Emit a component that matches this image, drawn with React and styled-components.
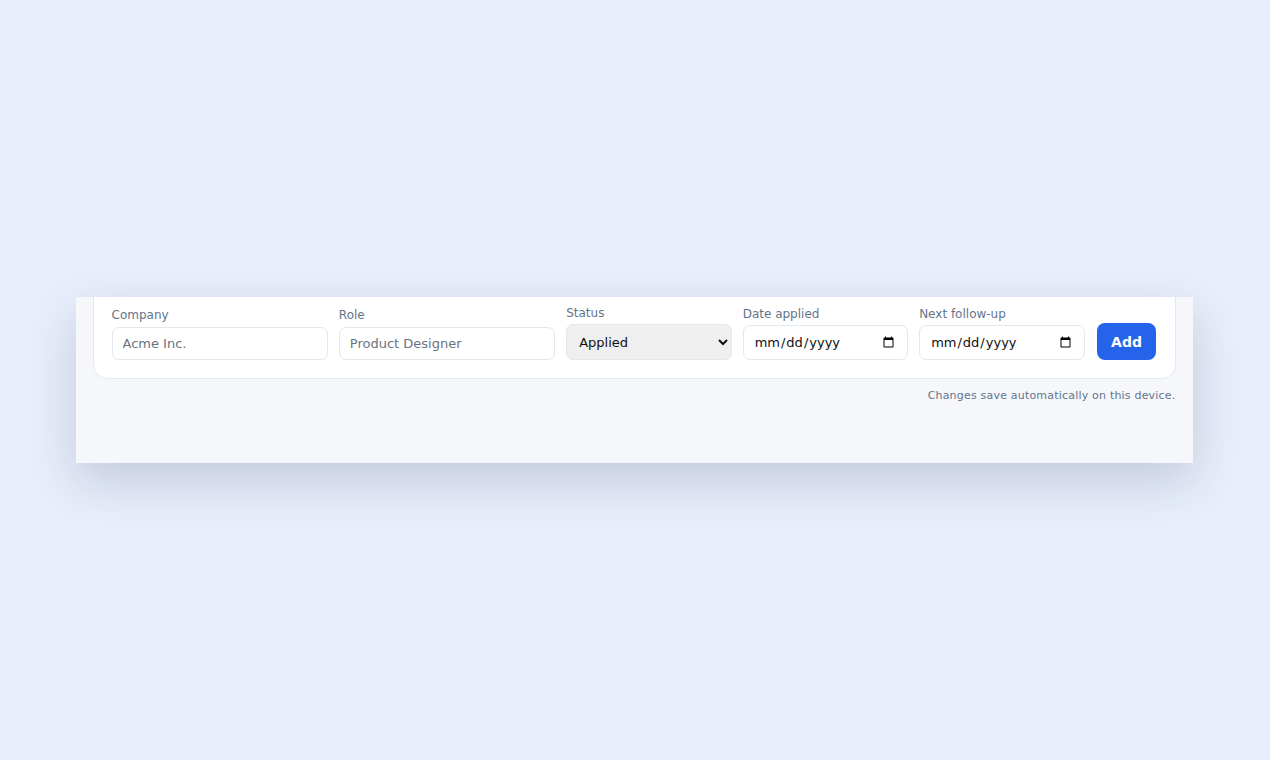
import React from "react";
import styled, { createGlobalStyle } from "styled-components";

const Global = createGlobalStyle`
  html, body { margin: 0; background: #e8eefb; font-family: "DejaVu Sans", sans-serif; }
`;
const Page = styled.div`
  width: 1270px; height: 760px; display: flex; justify-content: center; padding-top: 297px; box-sizing: border-box;
`;
const Panel = styled.div`
  width: 1117px; height: 166px; background: #f5f7fb; overflow: hidden; margin-left: -2px;
  box-shadow: 0 18px 45px rgba(30, 41, 80, 0.18);
  padding: 0 17px; box-sizing: border-box;
`;
const Card = styled.div`
  margin-top: -14px; background: #fff; border: 1px solid #e3e7ee; border-radius: 14px;
  padding: 22px 18px 18px; display: flex; align-items: flex-end; gap: 11px;
`;
const Field = styled.label`
  display: flex; flex-direction: column; gap: ${p => p.$gap}px; width: ${p => p.$w}px;
  font-size: 12px; color: #64748b;
`;
const Input = styled.input`
  box-sizing: border-box; height: ${p => p.$h || 33}px; border: 1px solid #e3e7ee; border-radius: 7px;
  padding: 0 10px; font: 13px "DejaVu Sans", sans-serif; color: #111; background: #fff; width: 100%;
  &::placeholder { color: #6b7280; }
`;
const Select = styled.select`
  box-sizing: border-box; height: 36px; border: 1px solid #e3e7ee; border-radius: 7px; background: #efefef;
  font: 13px "DejaVu Sans", sans-serif; color: #111; padding: 0 8px; width: 100%;
`;
const Button = styled.button`
  width: 60px; height: 37px; border: none; border-radius: 8px; background: #2563eb; color: #fff;
  font: bold 14px "DejaVu Sans", sans-serif; margin-left: 1px;
`;
const Note = styled.div`
  text-align: right; font-size: 11px; color: #64748b; margin-top: 10px; letter-spacing: 0.2px;
`;

export default function App() {
  return (
    <>
      <Global />
      <Page>
        <Panel>
          <Card>
            <Field $w={217} $gap={5}>Company<Input placeholder="Acme Inc." /></Field>
            <Field $w={217} $gap={5}>Role<Input placeholder="Product Designer" /></Field>
            <Field $w={166} $gap={4}>Status<Select defaultValue="Applied"><option>Applied</option><option>Interviewing</option><option>Offer</option></Select></Field>
            <Field $w={166} $gap={4}>Date applied<Input type="date" $h={35} /></Field>
            <Field $w={166} $gap={4}>Next follow-up<Input type="date" $h={35} /></Field>
            <Button>Add</Button>
          </Card>
          <Note>Changes save automatically on this device.</Note>
        </Panel>
      </Page>
    </>
  );
}
